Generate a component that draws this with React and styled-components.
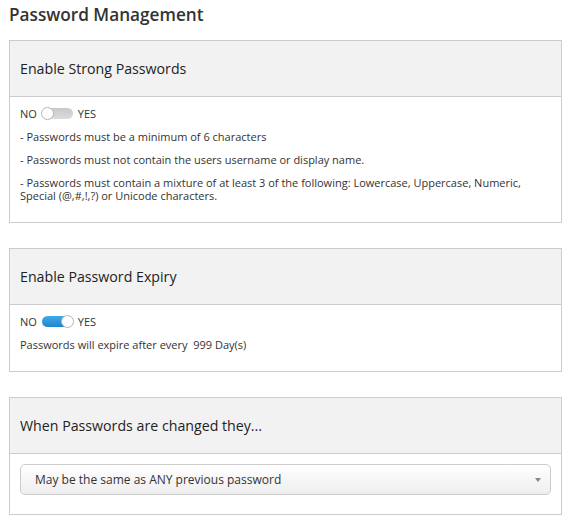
import React from "react";
import styled, { createGlobalStyle } from "styled-components";

const Global = createGlobalStyle`
  html, body { margin: 0; padding: 0; background: #fff; }
  body { font-family: "Open Sans", "Liberation Sans", sans-serif; color: #333; }
`;

const Page = styled.div`
  padding: 3px 10px 0 9px;
  width: 553px;
`;

const Title = styled.h1`
  margin: 0 0 13px 0;
  font-size: 17.2px;
  font-weight: 600;
  line-height: 24px;
  color: #333;
`;

const Panel = styled.section`
  border: 1px solid #ccc;
  margin-bottom: 25px;
`;

const Header = styled.div`
  background: #f2f2f2;
  border-bottom: 1px solid #ccc;
  height: 55px;
  display: flex;
  align-items: center;
  padding: 0 10px;
  font-size: 14.2px;
  font-weight: 400;
  color: #222;
`;

const Body = styled.div`
  padding: ${(p) => p.$pad || "10px 10px 10px"};
  font-size: 11px;
  line-height: 13px;
  color: #333;
`;

const Para = styled.p`
  margin: 0 0 10px 0;
`;

const ToggleRow = styled.div`
  display: flex;
  align-items: center;
  gap: 4px;
  margin-bottom: 10px;
`;

const Track = styled.span`
  position: relative;
  display: inline-block;
  width: 31px;
  height: 11px;
  border-radius: 6px;
  background: ${(p) =>
    p.$on
      ? "linear-gradient(#43a9e8, #1e86cf)"
      : "linear-gradient(#c8c8c8, #dcdcdc)"};
  margin: 0 1px;
`;

const Knob = styled.span`
  position: absolute;
  top: -1px;
  ${(p) => (p.$on ? "right: -1px;" : "left: -1px;")}
  width: 11px;
  height: 11px;
  border-radius: 50%;
  background: #fff;
  border: 1px solid #b5b5b5;
`;

const Select = styled.div`
  height: 29px;
  border: 1px solid #ccc;
  border-radius: 5px;
  background: linear-gradient(#ffffff, #eeeeee);
  display: flex;
  align-items: center;
  justify-content: space-between;
  padding: 0 9px 0 14px;
  font-size: 12px;
  color: #333;
`;

const Arrow = styled.span`
  width: 0;
  height: 0;
  border-left: 3px solid transparent;
  border-right: 3px solid transparent;
  border-top: 4px solid #888;
`;

const Toggle = ({ on }) => (
  <ToggleRow>
    <span>NO</span>
    <Track $on={on}>
      <Knob $on={on} />
    </Track>
    <span>YES</span>
  </ToggleRow>
);

export default function App() {
  return (
    <>
      <Global />
      <Page>
        <Title>Password Management</Title>
        <Panel>
          <Header>Enable Strong Passwords</Header>
          <Body>
            <Toggle on={false} />
            <Para>- Passwords must be a minimum of 6 characters</Para>
            <Para>- Passwords must not contain the users username or display name.</Para>
            <Para>
              - Passwords must contain a mixture of at least 3 of the following: Lowercase,
              Uppercase, Numeric, Special (@,#,!,?) or Unicode characters.
            </Para>
          </Body>
        </Panel>
        <Panel>
          <Header>Enable Password Expiry</Header>
          <Body>
            <Toggle on={true} />
            <Para>Passwords will expire after every&nbsp; 999 Day(s)</Para>
          </Body>
        </Panel>
        <Panel>
          <Header>When Passwords are changed they...</Header>
          <Body $pad="10px 10px 19px">
            <Select>
              <span>May be the same as ANY previous password</span>
              <Arrow />
            </Select>
          </Body>
        </Panel>
      </Page>
    </>
  );
}
